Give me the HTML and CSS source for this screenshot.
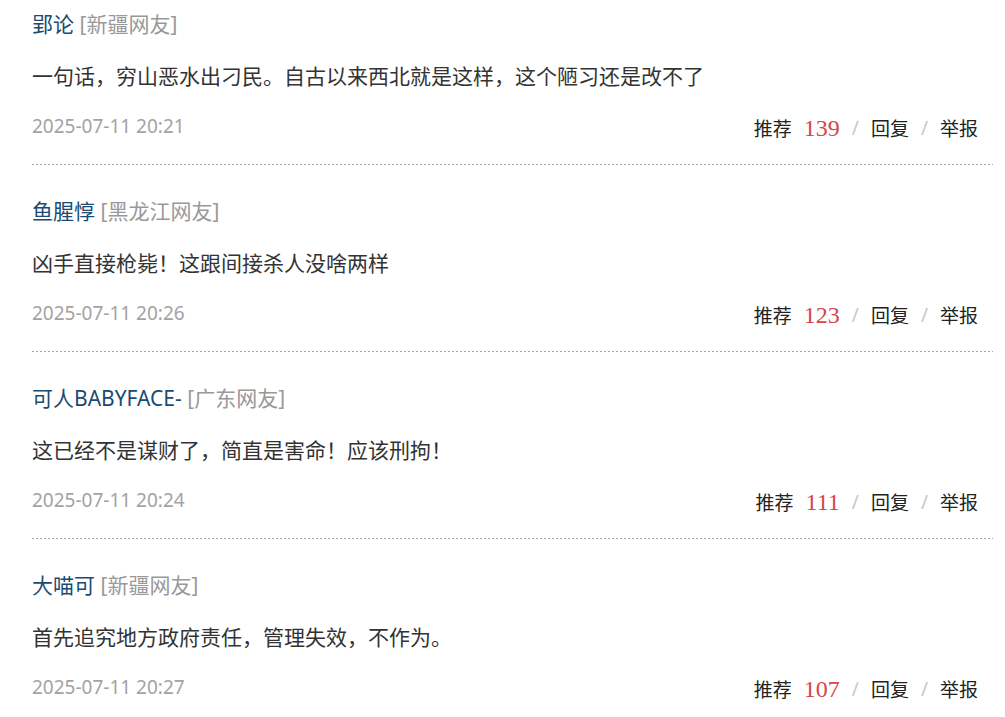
FILE: index.html
```html
<!DOCTYPE html>
<html lang="zh-CN">

<head>
    <meta charset="UTF-8">
    <meta name="viewport" content="width=device-width, initial-scale=1.0">
    <title>网友评论</title>
    <link rel="stylesheet" href="styles.css">
</head>

<body>

    <div class="comment-list">
        <div class="comment">
            <div class="user"><span class="name">郢论</span> <span class="area">[新疆网友]</span></div>
            <p class="text">一句话，穷山恶水出刁民。自古以来西北就是这样，这个陋习还是改不了</p>
            <div class="meta">
                <span class="time">2025-07-11 20:21</span>
                <div class="actions">
                    <a href="#">推荐</a><span class="num">139</span><span class="sep">/</span><a href="#">回复</a><span class="sep">/</span><a href="#">举报</a>
                </div>
            </div>
        </div>

        <div class="comment">
            <div class="user"><span class="name">鱼腥惇</span> <span class="area">[黑龙江网友]</span></div>
            <p class="text">凶手直接枪毙！这跟间接杀人没啥两样</p>
            <div class="meta">
                <span class="time">2025-07-11 20:26</span>
                <div class="actions">
                    <a href="#">推荐</a><span class="num">123</span><span class="sep">/</span><a href="#">回复</a><span class="sep">/</span><a href="#">举报</a>
                </div>
            </div>
        </div>

        <div class="comment">
            <div class="user"><span class="name">可人BABYFACE-</span> <span class="area">[广东网友]</span></div>
            <p class="text">这已经不是谋财了，简直是害命！应该刑拘！</p>
            <div class="meta">
                <span class="time">2025-07-11 20:24</span>
                <div class="actions">
                    <a href="#">推荐</a><span class="num">111</span><span class="sep">/</span><a href="#">回复</a><span class="sep">/</span><a href="#">举报</a>
                </div>
            </div>
        </div>

        <div class="comment">
            <div class="user"><span class="name">大喵可</span> <span class="area">[新疆网友]</span></div>
            <p class="text">首先追究地方政府责任，管理失效，不作为。</p>
            <div class="meta">
                <span class="time">2025-07-11 20:27</span>
                <div class="actions">
                    <a href="#">推荐</a><span class="num">107</span><span class="sep">/</span><a href="#">回复</a><span class="sep">/</span><a href="#">举报</a>
                </div>
            </div>
        </div>
    </div>

</body>

</html>
```

FILE: styles.css
```css
body {
    margin: 0;
    background-color: #fff;
    font-family: "Noto Sans", "Noto Sans CJK SC", sans-serif;
    color: #333;
}

.comment-list {
    padding: 0 12px 0 32px;
}

.comment {
    padding: 32px 0 27px;
    background-image: linear-gradient(to right, #a6a6a6 50%, transparent 50%);
    background-size: 4px 1px;
    background-repeat: repeat-x;
    background-position: left bottom;
}

.comment:first-child {
    padding-top: 10px;
}

.user {
    font-size: 21px;
    line-height: 28px;
}

.name {
    color: #1b4b72;
}

.area {
    color: #999;
}

.text {
    margin: 24px 0 0;
    font-size: 21px;
    line-height: 28px;
    color: #333;
}

.meta {
    display: flex;
    justify-content: space-between;
    align-items: center;
    margin-top: 24px;
    height: 24px;
}

.time {
    font-size: 19px;
    color: #a3a3a3;
}

.actions {
    display: flex;
    align-items: center;
    gap: 12px;
    padding-right: 15px;
    font-size: 19px;
    position: relative;
    top: 2px;
}

.actions a {
    color: #222;
    text-decoration: none;
}

.num {
    font-family: "Liberation Serif", serif;
    font-size: 24px;
    color: #d4464b;
}

.sep {
    color: #c8c8c8;
}
```
